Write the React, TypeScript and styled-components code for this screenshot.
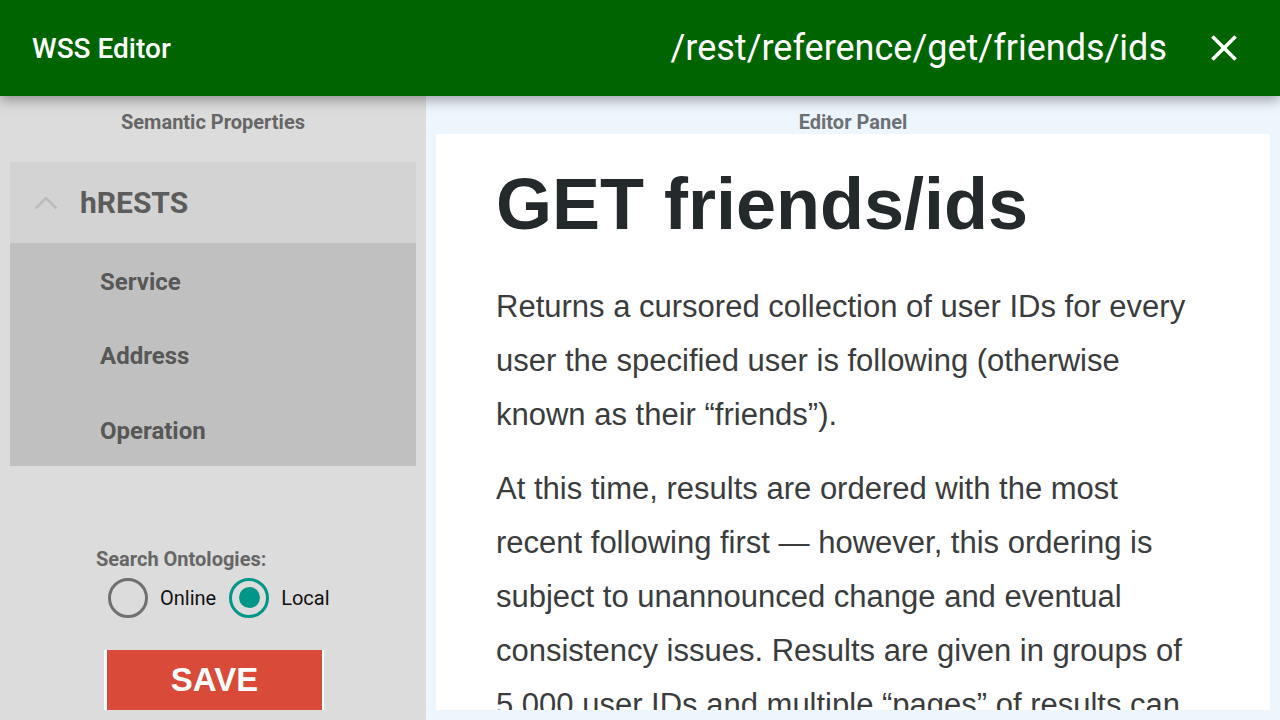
import React from 'react';
import styled, { createGlobalStyle } from 'styled-components';

const GlobalStyle = createGlobalStyle`
  html, body {
    margin: 0;
    padding: 0;
    width: 1280px;
    height: 720px;
    overflow: hidden;
  }
  body {
    font-family: Roboto, "Liberation Sans", sans-serif;
  }
`;

const Page = styled.div`
  width: 1280px;
  height: 720px;
  display: flex;
  flex-direction: column;
  overflow: hidden;
`;

const AppBar = styled.header`
  position: relative;
  z-index: 2;
  height: 96px;
  flex: 0 0 96px;
  background: #006400;
  color: #fff;
  display: flex;
  align-items: center;
  padding: 0 32px;
  box-shadow: 0 4px 12px rgba(0, 0, 0, 0.35);
`;

const AppTitle = styled.h1`
  margin: 0;
  font-size: 28px;
  font-weight: 500;
  flex: 1;
`;

const UrlText = styled.span`
  font-size: 36px;
  font-weight: 400;
  margin-right: 35px;
`;

const CloseButton = styled.button`
  width: 44px;
  height: 44px;
  border: 0;
  padding: 0;
  background: transparent;
  color: #fff;
  display: flex;
  align-items: center;
  justify-content: center;
  margin-right: 2px;
`;

const Body = styled.div`
  flex: 1;
  display: flex;
  min-height: 0;
`;

const Sidebar = styled.aside`
  width: 426px;
  flex: 0 0 426px;
  background: #dcdcdc;
  padding: 0 10px;
  box-sizing: border-box;
`;

const PanelTitle = styled.div<{ $height: number; $color: string }>`
  height: ${(p) => p.$height}px;
  box-sizing: border-box;
  padding-top: 14px;
  line-height: 24px;
  font-size: 20px;
  font-weight: 700;
  text-align: center;
  color: ${(p) => p.$color};
`;

const Accordion = styled.section`
  background: #c0c0c0;
`;

const AccordionHead = styled.div`
  height: 81px;
  background: #d3d3d3;
  display: flex;
  align-items: center;
  padding-left: 24px;
  gap: 22px;
  font-size: 30px;
  font-weight: 700;
  color: #5c5c5c;
`;

const AccordionItem = styled.div`
  height: 74.3px;
  box-sizing: border-box;
  padding-top: 4px;
  display: flex;
  align-items: center;
  padding-left: 90px;
  font-size: 24px;
  font-weight: 700;
  color: #575757;
`;

const SearchForm = styled.div`
  margin-top: 82px;
  padding-left: 86px;
`;

const SearchLabel = styled.div`
  font-size: 20px;
  line-height: 22px;
  font-weight: 700;
  color: #666;
`;

const RadioRow = styled.div`
  display: flex;
  align-items: center;
  height: 44px;
  margin-top: 6px;
  margin-left: 12px;
`;

const RadioOption = styled.label`
  display: flex;
  align-items: center;
  gap: 12px;
  font-size: 20px;
  color: #111;
  margin-right: 13px;
`;

const RadioRing = styled.span<{ $checked: boolean }>`
  width: 40px;
  height: 40px;
  box-sizing: border-box;
  border-radius: 50%;
  border: 3.5px solid ${(p) => (p.$checked ? '#009688' : '#707070')};
  display: flex;
  align-items: center;
  justify-content: center;

  &::after {
    content: '';
    display: ${(p) => (p.$checked ? 'block' : 'none')};
    width: 21px;
    height: 21px;
    border-radius: 50%;
    background: #009688;
  }
`;

const SaveButton = styled.button`
  display: block;
  margin: 30px 0 0 94px;
  width: 220px;
  height: 60px;
  border: 0;
  border-left: 3px solid #fff;
  border-right: 2px solid #fff;
  background: #d94a38;
  color: #fff;
  font-family: "Liberation Sans", Arial, sans-serif;
  font-weight: 700;
  font-size: 33px;
  padding: 0;
`;

const EditorArea = styled.main`
  flex: 1;
  background: #edf5fd;
  padding: 0 10px 10px;
  display: flex;
  flex-direction: column;
  min-width: 0;
`;

const Document = styled.article`
  flex: 1;
  background: #fff;
  overflow: hidden;
  padding: 0 68px 0 60px;
  color: #3a3c3e;
  font-family: "Liberation Sans", Arial, sans-serif;
`;

const DocHeading = styled.h1`
  margin: 26px 0 0;
  font-size: 72px;
  line-height: 88px;
  font-weight: 700;
  color: #24292b;
`;

const DocParagraph = styled.p`
  margin: 32px 0 20px;
  font-size: 31px;
  line-height: 54px;
  font-weight: 300;
  & + & {
    margin-top: 0;
  }
`;

const RadioChoice = ({ label, checked }: { label: string; checked: boolean }) => (
  <RadioOption>
    <RadioRing $checked={checked} />
    {label}
  </RadioOption>
);

const App = () => {
  return (
    <>
      <GlobalStyle />
      <Page>
        <AppBar>
          <AppTitle>WSS Editor</AppTitle>
          <UrlText>/rest/reference/get/friends/ids</UrlText>
          <CloseButton aria-label="close">
            <svg width="44" height="44" viewBox="0 0 24 24">
              <path
                d="M19 6.41 17.59 5 12 10.59 6.41 5 5 6.41 10.59 12 5 17.59 6.41 19 12 13.41 17.59 19 19 17.59 13.41 12z"
                fill="currentColor"
              />
            </svg>
          </CloseButton>
        </AppBar>
        <Body>
          <Sidebar>
            <PanelTitle $height={66} $color="#666">Semantic Properties</PanelTitle>
            <Accordion>
              <AccordionHead>
                <svg width="24" height="14" viewBox="0 0 24 14">
                  <polyline points="1.5,12.5 12,2 22.5,12.5" fill="none" stroke="#bcbcbc" strokeWidth="2.5" />
                </svg>
                hRESTS
              </AccordionHead>
              {['Service', 'Address', 'Operation'].map((item) => (
                <AccordionItem key={item}>{item}</AccordionItem>
              ))}
            </Accordion>
            <SearchForm>
              <SearchLabel>Search Ontologies:</SearchLabel>
              <RadioRow>
                <RadioChoice label="Online" checked={false} />
                <RadioChoice label="Local" checked />
              </RadioRow>
            </SearchForm>
            <SaveButton>SAVE</SaveButton>
          </Sidebar>
          <EditorArea>
            <PanelTitle $height={38} $color="#6c7075">Editor Panel</PanelTitle>
            <Document>
              <DocHeading>GET friends/ids</DocHeading>
              <DocParagraph>
                Returns a cursored collection of user IDs for every user the specified user is following
                (otherwise known as their “friends”).
              </DocParagraph>
              <DocParagraph>
                At this time, results are ordered with the most recent following first — however, this
                ordering is subject to unannounced change and eventual consistency issues. Results are given
                in groups of 5,000 user IDs and multiple “pages” of results can be navigated through using
                the next_cursor value in subsequent requests.
              </DocParagraph>
            </Document>
          </EditorArea>
        </Body>
      </Page>
    </>
  );
};

export default App;
